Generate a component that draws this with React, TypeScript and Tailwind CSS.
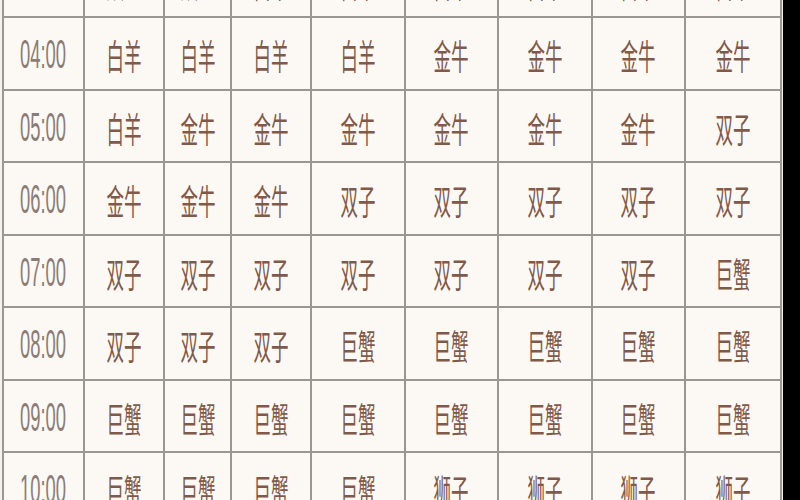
import React from "react";

const rows: [string, string[]][] = [
  ["03:00", ["双鱼", "双鱼", "白羊", "白羊", "白羊", "白羊", "白羊", "白羊"]],
  ["04:00", ["白羊", "白羊", "白羊", "白羊", "金牛", "金牛", "金牛", "金牛"]],
  ["05:00", ["白羊", "金牛", "金牛", "金牛", "金牛", "金牛", "金牛", "双子"]],
  ["06:00", ["金牛", "金牛", "金牛", "双子", "双子", "双子", "双子", "双子"]],
  ["07:00", ["双子", "双子", "双子", "双子", "双子", "双子", "双子", "巨蟹"]],
  ["08:00", ["双子", "双子", "双子", "巨蟹", "巨蟹", "巨蟹", "巨蟹", "巨蟹"]],
  ["09:00", ["巨蟹", "巨蟹", "巨蟹", "巨蟹", "巨蟹", "巨蟹", "巨蟹", "巨蟹"]],
  ["10:00", ["巨蟹", "巨蟹", "巨蟹", "巨蟹", "狮子", "狮子", "狮子", "狮子"]],
];

export default function App() {
  return (
    <div className="w-[800px] h-[500px] overflow-hidden bg-[#f4f2ef] flex">
      <div className="w-[783px] h-full overflow-hidden pl-[2px]">
        <div className="mt-[-54.5px] grid grid-cols-[79px_78px_65px_78px_92px_91px_92px_91px_94px] auto-rows-[70.5px] gap-[2px] bg-[#9c9690] px-[2px] w-fit">
          {rows.map(([time, signs]) => (
            <React.Fragment key={time}>
              <div className="bg-[#fcf9f4] flex items-center justify-center">
                <span
                  className="inline-block scale-x-[0.46] text-[40px] leading-none text-[#8a7d76] pt-[2px]"
                  style={{ fontFamily: '"Liberation Sans", Arial, sans-serif' }}
                >
                  {time}
                </span>
              </div>
              {signs.map((s, i) => (
                <div key={i} className="bg-[#fcf9f4] flex items-center justify-center">
                  <span
                    className="inline-block scale-x-[0.5] text-[35px] leading-none text-[#80594a] pt-[3px] whitespace-nowrap"
                    style={{ fontFamily: '"Noto Sans CJK SC", sans-serif' }}
                  >
                    {s}
                  </span>
                </div>
              ))}
            </React.Fragment>
          ))}
        </div>
      </div>
      <div className="flex-1 bg-black" />
    </div>
  );
}
